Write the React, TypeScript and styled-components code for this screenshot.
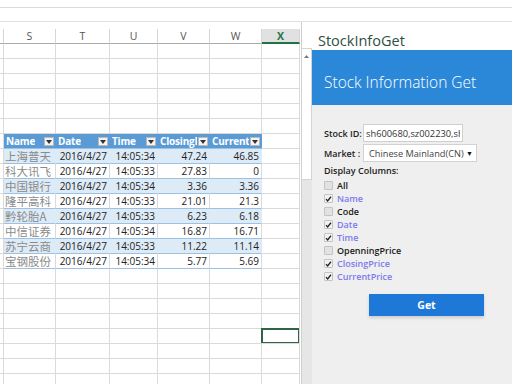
import React from "react"
import styled, { createGlobalStyle } from "styled-components"

const GlobalStyle = createGlobalStyle`
  html, body { margin: 0; padding: 0; background: #ffffff; }
  body { font-family: "Open Sans", "Liberation Sans", sans-serif; }
  * { box-sizing: border-box; }
`

const COLS = [4, 52, 54, 48, 52, 52, 38]
const LETTERS = ["", "S", "T", "U", "V", "W", "X"]

interface StockRow {
  name: string
  date: string
  time: string
  closing: string
  current: string
}

const stocks: StockRow[] = [
  { name: "上海普天", date: "2016/4/27", time: "14:05:34", closing: "47.24", current: "46.85" },
  { name: "科大讯飞", date: "2016/4/27", time: "14:05:33", closing: "27.83", current: "0" },
  { name: "中国银行", date: "2016/4/27", time: "14:05:34", closing: "3.36", current: "3.36" },
  { name: "隆平高科", date: "2016/4/27", time: "14:05:33", closing: "21.01", current: "21.3" },
  { name: "黔轮胎A", date: "2016/4/27", time: "14:05:33", closing: "6.23", current: "6.18" },
  { name: "中信证券", date: "2016/4/27", time: "14:05:34", closing: "16.87", current: "16.71" },
  { name: "苏宁云商", date: "2016/4/27", time: "14:05:33", closing: "11.22", current: "11.14" },
  { name: "宝钢股份", date: "2016/4/27", time: "14:05:34", closing: "5.77", current: "5.69" },
]

const tableHeaders = ["Name", "Date", "Time", "ClosingPrice", "CurrentPrice"]

const columns = [
  { label: "All", checked: false },
  { label: "Name", checked: true },
  { label: "Code", checked: false },
  { label: "Date", checked: true },
  { label: "Time", checked: true },
  { label: "OpenningPrice", checked: false },
  { label: "ClosingPrice", checked: true },
  { label: "CurrentPrice", checked: true },
]

const App: React.FC = () => {
  const emptyBefore = Array.from({ length: 6 })
  const emptyAfter = Array.from({ length: 8 })

  return (
    <>
      <GlobalStyle />
      <Page>
        <RibbonEdge />
        <FormulaBar />
        <Main>
          <Sheet>
            <SheetGrid>
              {LETTERS.map((l, i) => (
                <ColHeader key={`h${i}`} $selected={l === "X"}>{l}</ColHeader>
              ))}

              {emptyBefore.map((_, r) =>
                COLS.map((_, c) => <GridCell key={`a${r}-${c}`} />)
              )}

              <GridCell />
              {tableHeaders.map((h) => (
                <TableHead key={h}>
                  <HeadText>{h}</HeadText>
                  <FilterBtn>
                    <svg width="6" height="4" viewBox="0 0 6 4">
                      <path d="M0 0 L6 0 L3 4 Z" fill="#333" />
                    </svg>
                  </FilterBtn>
                </TableHead>
              ))}
              <GridCell />

              {stocks.map((s, r) => (
                <React.Fragment key={s.name}>
                  <GridCell />
                  <DataCell $band={r % 2 === 0} $cjk>{s.name}</DataCell>
                  <DataCell $band={r % 2 === 0} $right>{s.date}</DataCell>
                  <DataCell $band={r % 2 === 0} $right>{s.time}</DataCell>
                  <DataCell $band={r % 2 === 0} $right>{s.closing}</DataCell>
                  <DataCell $band={r % 2 === 0} $right>{s.current}</DataCell>
                  <GridCell />
                </React.Fragment>
              ))}

              {emptyAfter.map((_, r) =>
                COLS.map((_, c) => (
                  <GridCell key={`b${r}-${c}`} $active={r === 4 && c === 6} />
                ))
              )}
            </SheetGrid>
          </Sheet>

          <ScrollStrip>
            <ScrollTop />
            <ScrollBar>
              <ScrollArrow>
                <svg width="5" height="3" viewBox="0 0 5 3">
                  <path d="M0 3 L2.5 0 L5 3 Z" fill="#777" />
                </svg>
              </ScrollArrow>
            </ScrollBar>
          </ScrollStrip>

          <Pane>
            <PaneTitle>StockInfoGet</PaneTitle>
            <Banner>Stock Information Get</Banner>
            <PaneBody>
              <FormRow>
                <Label>Stock ID:</Label>
                <TextInput readOnly defaultValue="sh600680,sz002230,sh601988,sz000998" />
              </FormRow>
              <FormRow $gap={2}>
                <Label>Market :</Label>
                <SelectBox>
                  <span>Chinese Mainland(CN)</span>
                  <SelectArrow>▼</SelectArrow>
                </SelectBox>
              </FormRow>
              <SectionLabel>Display Columns:</SectionLabel>
              <CheckList>
                {columns.map((c) => (
                  <CheckRow key={c.label}>
                    <CheckBox $checked={c.checked}>
                      {c.checked && (
                        <svg width="8" height="8" viewBox="0 0 8 8">
                          <path d="M1.2 4.2 L3 6.2 L6.8 1.4" stroke="#222" strokeWidth="1.5" fill="none" />
                        </svg>
                      )}
                    </CheckBox>
                    <CheckLabel $checked={c.checked}>{c.label}</CheckLabel>
                  </CheckRow>
                ))}
              </CheckList>
              <GetButton>Get</GetButton>
            </PaneBody>
          </Pane>
        </Main>
      </Page>
    </>
  )
}

const Page = styled.div`
  width: 512px;
  height: 384px;
  display: flex;
  flex-direction: column;
  overflow: hidden;
  background: #ffffff;
`
const RibbonEdge = styled.div`
  height: 8px;
  border-bottom: 1px solid #dcdcdc;
`
const FormulaBar = styled.div`
  height: 14px;
  border-bottom: 1px solid #e2e2e2;
`
const Main = styled.div`
  flex: 1;
  min-height: 0;
  display: flex;
`
const Sheet = styled.div`
  width: 301px;
  padding-top: 7px;
  overflow: hidden;
`
const SheetGrid = styled.div`
  display: grid;
  grid-template-columns: ${COLS.map((c) => `${c}px`).join(" ")};
  grid-auto-rows: 15px;
`
const ColHeader = styled.div<{ $selected?: boolean }>`
  display: flex;
  align-items: center;
  justify-content: center;
  font-size: 10.5px;
  color: ${(p) => (p.$selected ? "#217346" : "#555")};
  font-weight: ${(p) => (p.$selected ? 700 : 400)};
  background: ${(p) => (p.$selected ? "#e1e1e1" : "#ffffff")};
  border-right: 1px solid #d6d6d6;
  border-bottom: ${(p) => (p.$selected ? "2px solid #217346" : "1px solid #ababab")};
`
const GridCell = styled.div<{ $active?: boolean }>`
  border-right: 1px solid #dadada;
  border-bottom: 1px solid #dadada;
  box-shadow: ${(p) => (p.$active ? "inset 0 0 0 1px #2f6444, -1px -1px 0 0 #2f6444" : "none")};
`
const TableHead = styled.div`
  position: relative;
  background: #5b9bd5;
  color: #ffffff;
  font-weight: 700;
  font-size: 10px;
  display: flex;
  align-items: center;
  padding: 0 13px 0 2px;
  border-bottom: 1px solid #9bc2e6;
  overflow: hidden;
`
const HeadText = styled.span`
  white-space: nowrap;
  overflow: hidden;
  letter-spacing: -0.2px;
`
const FilterBtn = styled.span`
  position: absolute;
  right: 2px;
  top: 3px;
  width: 10px;
  height: 9px;
  background: #f4f4f4;
  border: 1px solid #b8b8b8;
  display: flex;
  align-items: center;
  justify-content: center;
`
const DataCell = styled.div<{ $band: boolean; $right?: boolean; $cjk?: boolean }>`
  background: ${(p) => (p.$band ? "#ddebf7" : "#ffffff")};
  border-right: 1px solid ${(p) => (p.$band ? "#ddebf7" : "#dadada")};
  border-bottom: 1px solid #9bc2e6;
  display: flex;
  align-items: center;
  justify-content: ${(p) => (p.$right ? "flex-end" : "flex-start")};
  padding: 0 2px 0 ${(p) => (p.$cjk ? "1px" : "2px")};
  font-family: ${(p) => (p.$cjk ? '"Noto Sans CJK SC", sans-serif' : '"Open Sans", sans-serif')};
  font-size: ${(p) => (p.$cjk ? "11.5px" : "10px")};
  color: ${(p) => (p.$cjk ? "#8a8a8a" : "#222")};
  white-space: nowrap;
  overflow: hidden;
`
const ScrollStrip = styled.div`
  width: 11px;
  display: flex;
  flex-direction: column;
  background: #e6e6e6;
  border-left: 1px solid #d0d0d0;
`
const ScrollTop = styled.div`
  height: 26px;
  background: #ffffff;
`
const ScrollBar = styled.div`
  height: 132px;
  background: #ffffff;
  border: 1px solid #d4d4d4;
  border-left: none;
  display: flex;
  justify-content: center;
`
const ScrollArrow = styled.div`
  padding-top: 3px;
  height: 9px;
  line-height: 0;
`
const Pane = styled.div`
  width: 200px;
  display: flex;
  flex-direction: column;
  background: #efefef;
`
const PaneTitle = styled.div`
  height: 28px;
  background: #ffffff;
  padding: 11px 0 0 6px;
  font-size: 14.5px;
  color: #2f4f40;
  line-height: 16px;
`
const Banner = styled.div`
  height: 55px;
  background: #2b88d8;
  color: #ffffff;
  font-size: 15.5px;
  font-weight: 300;
  display: flex;
  align-items: center;
  padding: 9px 0 0 12px;
`
const PaneBody = styled.div`
  flex: 1;
  padding: 19px 0 0 12px;
  display: flex;
  flex-direction: column;
  align-items: flex-start;
`
const FormRow = styled.div<{ $gap?: number }>`
  display: flex;
  align-items: center;
  margin-top: ${(p) => p.$gap ?? 0}px;
`
const Label = styled.span`
  width: 39px;
  font-size: 9px;
  font-weight: 600;
  color: #222;
  white-space: nowrap;
`
const TextInput = styled.input`
  width: 100px;
  height: 18px;
  border: 1px solid #cfcfcf;
  background: #ffffff;
  font-family: "Open Sans", sans-serif;
  font-size: 9.3px;
  color: #333;
  padding: 0 2px;
  outline: none;
`
const SelectBox = styled.div`
  width: 114px;
  height: 18px;
  background: #ffffff;
  border: 1px solid #d2d2d2;
  display: flex;
  align-items: center;
  justify-content: space-between;
  padding: 0 3px 0 5px;
  font-size: 9.2px;
  color: #444;
  white-space: nowrap;
`
const SelectArrow = styled.span`
  font-size: 7px;
  color: #111;
`
const SectionLabel = styled.div`
  margin-top: 2px;
  font-size: 9px;
  font-weight: 600;
  color: #222;
  line-height: 14px;
`
const CheckList = styled.div`
  display: flex;
  flex-direction: column;
  padding-top: 1px;
`
const CheckRow = styled.div`
  height: 13px;
  display: flex;
  align-items: center;
  gap: 4px;
`
const CheckBox = styled.span<{ $checked: boolean }>`
  width: 9px;
  height: 9px;
  border: 1px solid #c4c4c4;
  border-radius: 1px;
  background: ${(p) => (p.$checked ? "#f2f2f2" : "#e2e2e2")};
  display: flex;
  align-items: center;
  justify-content: center;
`
const CheckLabel = styled.span<{ $checked: boolean }>`
  font-size: 9px;
  font-weight: 600;
  color: ${(p) => (p.$checked ? "#7b7bee" : "#1a1a1a")};
`
const GetButton = styled.button`
  margin: 11px 0 0 45px;
  width: 115px;
  height: 22px;
  border: none;
  background: #1e78d8;
  color: #ffffff;
  font-family: "Open Sans", sans-serif;
  font-weight: 700;
  font-size: 10.5px;
  box-shadow: 0 2px 3px rgba(0, 0, 0, 0.15);
`

export default App
